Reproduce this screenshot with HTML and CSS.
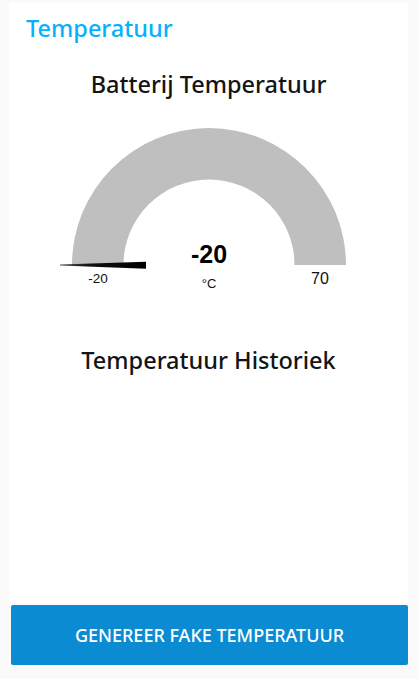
FILE: index.html
```html
<!DOCTYPE html>
<html lang="nl">
<head>
<meta charset="utf-8">
<title>Temperatuur</title>
<link rel="stylesheet" href="styles.css">
</head>
<body>
<div class="page">
  <section class="card">
    <div class="group-title">Temperatuur</div>
    <h2 class="widget-title first">Batterij Temperatuur</h2>
    <svg class="gauge" width="400" height="200" viewBox="0 0 400 200">
      <defs>
        <linearGradient id="ng" x1="0" y1="0" x2="1" y2="0">
          <stop offset="0" stop-color="#555"/>
          <stop offset="0.35" stop-color="#111"/>
          <stop offset="1" stop-color="#000"/>
        </linearGradient>
      </defs>
      <path d="M63 145 A137 137 0 0 1 337 145 L285.5 145 A85.5 85.5 0 0 0 114.5 145 Z" fill="#bfbfbf"/>
      <polygon points="51,144.6 137,141.8 137,148.8 51,145.4" fill="url(#ng)"/>
      <text class="g-value" x="200" y="142.7" text-anchor="middle">-20</text>
      <text class="g-unit" x="200" y="168" text-anchor="middle">°C</text>
      <text class="g-min" x="89" y="163.3" text-anchor="middle">-20</text>
      <text class="g-max" x="311" y="164" text-anchor="middle">70</text>
    </svg>
    <h2 class="widget-title second">Temperatuur Historiek</h2>
    <div class="chart"></div>
  </section>
  <button class="action">GENEREER FAKE TEMPERATUUR</button>
</div>
</body>
</html>
```
FILE: styles.css
```css
html, body {
  margin: 0;
  padding: 0;
  background: #fafafa;
}
body {
  font-family: "Noto Sans", "DejaVu Sans", sans-serif;
}
.page {
  display: flex;
  flex-direction: column;
  padding: 3px 10px 0 9px;
}
.card {
  background: #ffffff;
  height: 600px;
  display: flex;
  flex-direction: column;
}
.group-title {
  margin: 12px 0 0 17px;
  font-size: 23.5px;
  font-weight: 500;
  line-height: 26px;
  height: 26px;
  color: #05b1fb;
}
.widget-title {
  margin: 0;
  text-align: center;
  font-weight: 500;
  font-size: 23.5px;
  line-height: 30px;
  height: 30px;
  color: #141414;
}
.widget-title.first {
  margin-top: 28px;
}
.widget-title.second {
  margin-top: 25px;
}
.gauge {
  display: block;
  margin-top: 21px;
}
.gauge text {
  font-family: "Liberation Sans", Arial, sans-serif;
}
.g-value {
  font-size: 25px;
  font-weight: bold;
  fill: #010101;
}
.g-unit {
  font-size: 13px;
  fill: #111;
}
.g-min {
  font-size: 13.5px;
  fill: #111;
}
.g-max {
  font-size: 16px;
  fill: #111;
}
.chart {
  flex: 1;
}
.action {
  margin: 2px 0 0 2px;
  width: 397px;
  height: 60px;
  border: none;
  border-radius: 2px;
  background: #0a8bd2;
  color: #ffffff;
  font-family: "Noto Sans", "DejaVu Sans", sans-serif;
  font-size: 18px;
  font-weight: 500;
  padding: 0;
}
```
